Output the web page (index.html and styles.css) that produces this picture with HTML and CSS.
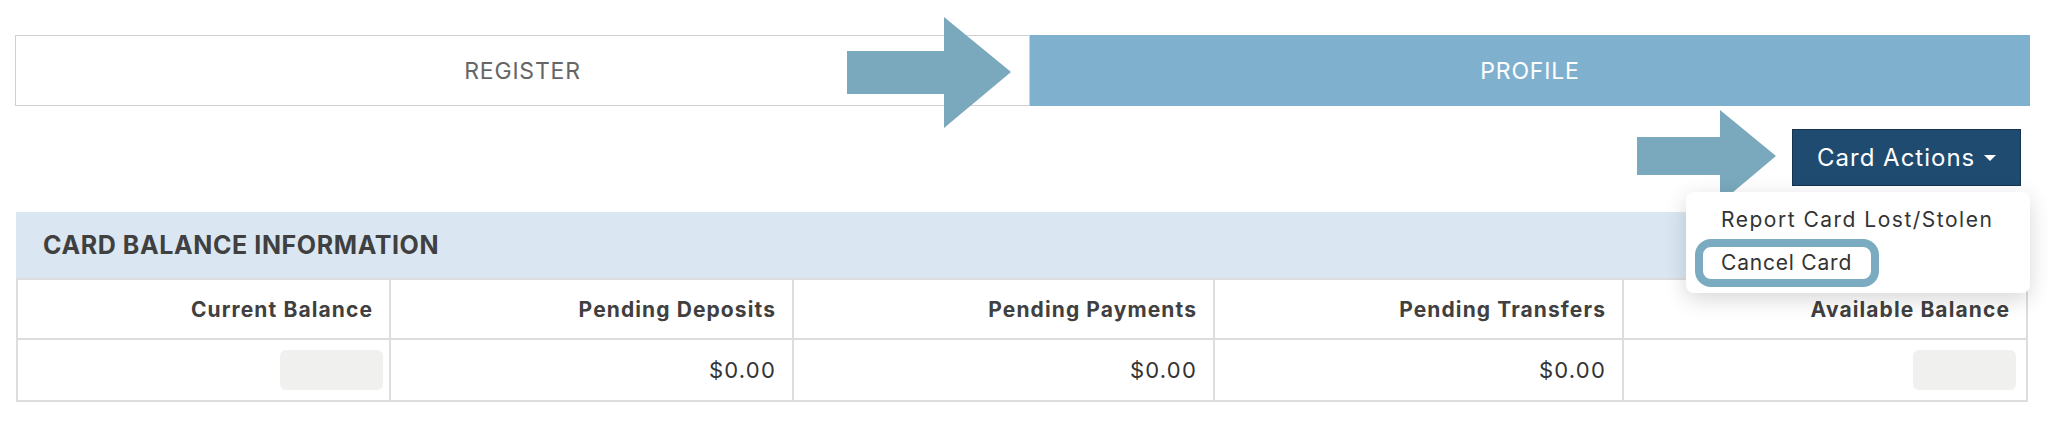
FILE: index.html
```html
<!DOCTYPE html>
<html lang="en">
<head>
<meta charset="utf-8">
<title>Card Profile</title>
<link rel="stylesheet" href="styles.css">
</head>
<body>
<div class="page">
  <div class="tabs">
    <div class="tab tab-register">REGISTER</div>
    <div class="tab tab-profile">PROFILE</div>
  </div>

  <div class="toolbar">
    <div class="actions">
      <button class="btn-actions" type="button">Card Actions <span class="caret"></span></button>
      <div class="menu">
        <div class="menu-item">Report Card Lost/Stolen</div>
        <div class="menu-item menu-item-hl"><span class="hl">Cancel Card</span></div>
      </div>
    </div>
  </div>

  <section class="balance">
    <h2 class="balance-title">CARD BALANCE INFORMATION</h2>
    <div class="grid">
      <div class="cell head">Current Balance</div>
      <div class="cell head">Pending Deposits</div>
      <div class="cell head">Pending Payments</div>
      <div class="cell head">Pending Transfers</div>
      <div class="cell head">Available Balance</div>
      <div class="cell data"><span class="ph ph-first"></span></div>
      <div class="cell data">$0.00</div>
      <div class="cell data">$0.00</div>
      <div class="cell data">$0.00</div>
      <div class="cell data"><span class="ph ph-last"></span></div>
    </div>
  </section>

  <svg class="arrow arrow-tabs" width="166" height="112" viewBox="0 0 166 112" aria-hidden="true">
    <polygon points="0,34 97,34 97,0 164,55 97,111 97,77 0,77" fill="#7aa9bd"/>
  </svg>
  <svg class="arrow arrow-btn" width="141" height="94" viewBox="0 0 141 94" aria-hidden="true">
    <polygon points="0,27 83,27 83,0 139,46 83,93 83,65 0,65" fill="#7aa9bd"/>
  </svg>
</div>
</body>
</html>
```

FILE: styles.css
```css
* { box-sizing: border-box; }

html, body {
  margin: 0;
  padding: 0;
  background: #ffffff;
}

body {
  font-family: "Inter", "Liberation Sans", sans-serif;
  color: #333333;
}

.page {
  position: relative;
  padding: 35px 0 0 15px;
  width: 2048px;
  height: 447px;
}

/* Tabs */
.tabs {
  display: flex;
  width: 2015px;
  height: 71px;
}

.tab {
  display: flex;
  align-items: center;
  justify-content: center;
  font-size: 23px;
  letter-spacing: 0.8px;
}

.tab-register {
  width: 1015px;
  border: 1px solid #d0d0d0;
  color: #666666;
  background: #ffffff;
}

.tab-profile {
  width: 1000px;
  background: #7fb1cf;
  color: #ffffff;
}

/* Toolbar + dropdown */
.toolbar {
  display: flex;
  justify-content: flex-end;
  width: 2006px;
  margin-top: 23px;
}

.actions {
  position: relative;
}

.btn-actions {
  display: flex;
  align-items: center;
  gap: 9px;
  height: 57px;
  width: 229px;
  padding: 0 0 0 24px;
  background: #1f4b70;
  border: 1px solid #15344f;
  color: #ffffff;
  font-family: "Inter", "Liberation Sans", sans-serif;
  font-size: 24px;
  letter-spacing: 1px;
  white-space: nowrap;
  cursor: pointer;
}

.caret {
  display: inline-block;
  width: 0;
  height: 0;
  border-left: 6px solid transparent;
  border-right: 6px solid transparent;
  border-top: 6px solid #ffffff;
}

.menu {
  position: absolute;
  top: 63px;
  right: -9px;
  width: 344px;
  height: 101px;
  padding-top: 12px;
  background: #ffffff;
  border-radius: 8px;
  box-shadow: 0 6px 22px rgba(0, 0, 0, 0.16);
  z-index: 5;
}

.menu-item {
  font-size: 21px;
  line-height: 32px;
  letter-spacing: 1.5px;
  color: #333333;
  padding-left: 35px;
  white-space: nowrap;
}

.menu-item-hl {
  padding-left: 9px;
  margin-top: 3px;
}

.hl {
  display: inline-block;
  border: 8px solid #7aabc0;
  border-radius: 16px;
  padding: 0 19px 0 18px;
  line-height: 32px;
  letter-spacing: 0.8px;
}

/* Balance section */
.balance {
  margin-top: 26px;
  margin-left: 1px;
  width: 2012px;
}

.balance-title {
  margin: 0;
  height: 66px;
  padding: 18px 0 0 27px;
  background: #dae7f2;
  font-size: 25px;
  line-height: 30px;
  font-weight: 700;
  color: #404040;
  letter-spacing: 0.6px;
}

.grid {
  display: grid;
  grid-template-columns: 373px 403px 421px 409px 404px;
  border-left: 2px solid #dddddd;
  border-top: 2px solid #dddddd;
}

.cell {
  display: flex;
  align-items: center;
  justify-content: flex-end;
  padding: 0 16px;
  border-right: 2px solid #dddddd;
  border-bottom: 2px solid #dddddd;
  white-space: nowrap;
}

.head {
  height: 60px;
  font-size: 21px;
  font-weight: 700;
  letter-spacing: 1.1px;
  color: #404040;
}

.data {
  height: 62px;
  font-size: 22px;
  letter-spacing: 1.2px;
  color: #333333;
}

.ph {
  display: block;
  width: 103px;
  height: 40px;
  background: #f0f0ef;
  border-radius: 6px;
}

.ph-first { margin-right: -10px; }
.ph-last { margin-right: -6px; }

/* Annotation arrows (overlay) */
.arrow {
  position: absolute;
  z-index: 4;
}

.arrow-tabs {
  left: 847px;
  top: 17px;
}

.arrow-btn {
  left: 1637px;
  top: 110px;
}
```
